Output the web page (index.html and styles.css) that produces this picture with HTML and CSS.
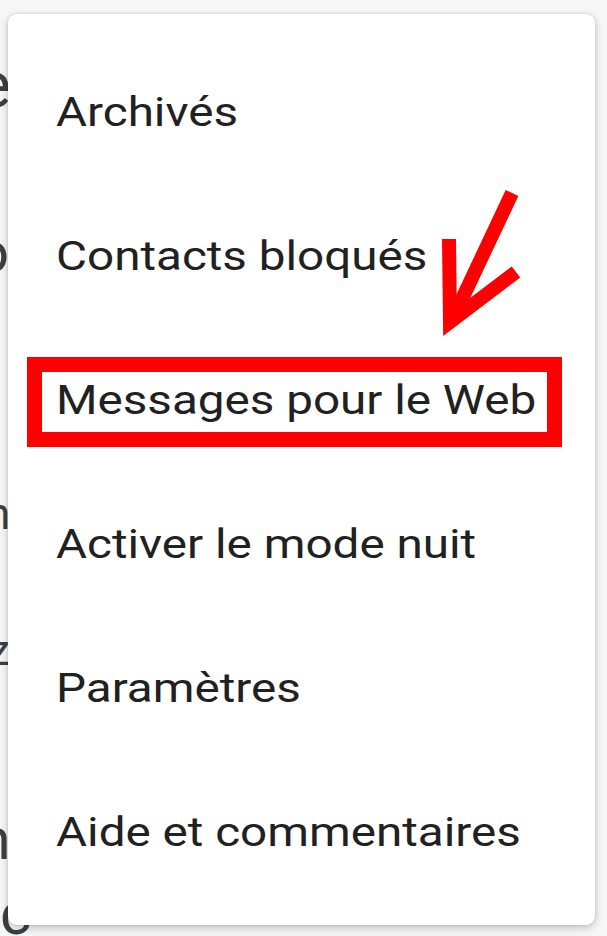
FILE: index.html
```html
<!DOCTYPE html>
<html lang="fr">
<head>
<meta charset="utf-8">
<title>Menu</title>
<link rel="stylesheet" href="styles.css">
</head>
<body>
<div class="screen">
  <div class="bg">
    <div class="bg-line l1"><span>e</span></div>
    <div class="bg-line l2"><span>o</span></div>
    <div class="bg-line l3"><span>n</span></div>
    <div class="bg-line l4"><span>z</span></div>
    <div class="bg-line l5"><span>n</span></div>
    <div class="bg-line l6"><span>c</span></div>
  </div>

  <div class="menu">
    <div class="item"><span>Archivés</span></div>
    <div class="item"><span>Contacts bloqués</span></div>
    <div class="item"><span>Messages pour le Web</span></div>
    <div class="item"><span>Activer le mode nuit</span></div>
    <div class="item"><span>Paramètres</span></div>
    <div class="item"><span>Aide et commentaires</span></div>
  </div>

  <div class="highlight"></div>
  <svg class="arrow" width="607" height="936" viewBox="0 0 607 936">
    <path d="M512 193 L454 316" fill="none" stroke="#ff0000" stroke-width="14" stroke-linecap="butt"/>
    <path d="M449 239 L450 322 L516 272" fill="none" stroke="#ff0000" stroke-width="14" stroke-linecap="butt" stroke-linejoin="miter" stroke-miterlimit="10"/>
  </svg>
</div>
</body>
</html>
```
FILE: styles.css
```css
html, body {
  margin: 0;
  padding: 0;
}
body {
  background: #f7f7f7;
  font-family: Roboto, "Noto Sans", "Liberation Sans", sans-serif;
}
.screen {
  position: relative;
  width: 607px;
  height: 936px;
  overflow: hidden;
  background: #f7f7f7;
}
.bg {
  display: flex;
  flex-direction: column;
  color: #3c4043;
}
.bg-line {
  white-space: nowrap;
  line-height: 1.172;
}
.bg-line span {
  display: inline-block;
}
.l1 { font-size: 64px; margin-top: 47.6px; }
.l1 span { margin-left: -23px; }
.l2 { font-size: 58px; margin-top: 96.6px; }
.l2 span { margin-left: -24px; }
.l3 { font-size: 44px; margin-top: 202px; }
.l3 span { margin-left: -14px; }
.l4 { font-size: 42px; margin-top: 85.2px; }
.l4 span { margin-left: -11px; }
.l5 { font-size: 57px; margin-top: 131.9px; }
.l5 span { margin-left: -21px; }
.l6 { font-size: 60px; margin-top: 5.4px; }
.l6 span { margin-left: 0; }

.menu {
  position: absolute;
  left: 8px;
  top: 14px;
  width: 587px;
  height: 911px;
  box-sizing: border-box;
  padding: 27px 0 20px;
  background: #ffffff;
  border-radius: 9px;
  box-shadow: 0 3px 10px rgba(0, 0, 0, 0.22), 0 0 3px rgba(0, 0, 0, 0.12);
  display: flex;
  flex-direction: column;
}
.item {
  height: 144px;
  line-height: 144px;
  padding-left: 48px;
  font-size: 40px;
  color: #212121;
  white-space: nowrap;
}
.item span {
  display: inline-block;
  transform: scaleX(1.19);
  transform-origin: 0 50%;
}
.highlight {
  position: absolute;
  left: 27px;
  top: 357px;
  width: 535px;
  height: 90px;
  box-sizing: border-box;
  border: 15px solid #ff0000;
}
.arrow {
  position: absolute;
  left: 0;
  top: 0;
}
```
